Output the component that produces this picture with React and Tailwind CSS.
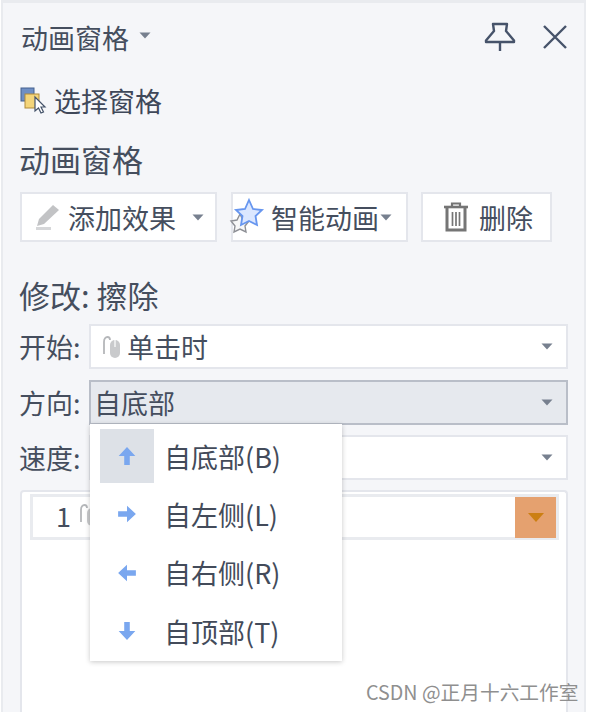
const font = { fontFamily: '"Noto Sans CJK SC", "Liberation Sans", sans-serif' };

function Caret({ className = "" }) {
  return (
    <svg width="12" height="7" viewBox="0 0 12 7" className={className}>
      <path d="M0.5 0.5H11.5L6 6.5Z" fill="#77808f" />
    </svg>
  );
}

function Mouse() {
  return (
    <svg width="20" height="24" viewBox="0 0 20 24" fill="none">
      <path d="M2 19V7c0-3 1.5-5 3.5-5S8 3 8 5" stroke="#b5b7ba" strokeWidth="1.8" />
      <rect x="8" y="5" width="10" height="18" rx="5" fill="#c9cacc" />
      <path d="M13 5v7" stroke="#fff" strokeWidth="1.2" />
    </svg>
  );
}

function Arrow({ rot }) {
  const r = { up: 0, right: 90, left: 270, down: 180 }[rot];
  return (
    <svg width="20" height="20" viewBox="0 0 18 18" style={{ transform: `rotate(${r}deg)` }}>
      <path d="M9 1L16.5 9H11.5V17H6.5V9H1.5Z" fill="#7aa7ef" />
    </svg>
  );
}

function Sel({ label, active, children }) {
  return (
    <div className="flex items-center h-[45px]">
      <span className="w-[69px] -ml-[1px] mr-[1px] text-[27px] leading-none whitespace-nowrap">{label}</span>
      <div
        className={`flex-1 h-full flex items-center border-2 pr-[13px] ${
          active ? "bg-[#e6e9ee] border-[#b9bec8]" : "bg-white border-[#e4e6ec]"
        }`}
      >
        <div className="flex-1 flex items-center min-w-0">{children}</div>
        <Caret />
      </div>
    </div>
  );
}

function MenuItem({ dir, text, active }) {
  return (
    <div className="flex items-center h-[58.3px] pl-[10px]">
      <div className={`w-[54px] h-[54px] flex items-center justify-center ${active ? "bg-[#dde1e7]" : ""}`}>
        <Arrow rot={dir} />
      </div>
      <span className="ml-[10px] text-[27px] leading-none text-[#434b5a] whitespace-nowrap">{text}</span>
    </div>
  );
}

export default function App() {
  return (
    <div className="relative w-[592px] h-[712px] overflow-hidden bg-white text-[#454e5e]" style={font}>
      <div className="ml-[1px] w-[585px] h-[712px] bg-[#f5f6f9] border-t-[3px] border-l-[2px] border-r-[2px] border-[#e9ebef] pl-[17px] pr-[16px] flex flex-col">
        <div className="flex items-center h-[68px] pt-[1px]">
          <span className="ml-[1px] text-[27px] leading-none">动画窗格</span>
          <Caret className="ml-[10px] mb-[4px]" />
          <div className="flex-1" />
          <svg width="32" height="32" viewBox="0 0 32 32" fill="none" stroke="#46536a" strokeWidth="2.4" className="mr-[27px] mb-[1px]">
            <path d="M9 3H23L22 10L30 19.5V21H2V19.5L10 10Z" strokeLinejoin="round" />
            <path d="M16 21V30" />
          </svg>
          <svg width="24" height="24" viewBox="0 0 24 24" fill="none" stroke="#46536a" strokeWidth="2.4" className="mr-[1px] mb-[1px]">
            <path d="M1 1L23 23M23 1L1 23" />
          </svg>
        </div>

        <div className="flex items-center h-[58px]">
          <svg width="27" height="27" viewBox="0 0 27 27" className="shrink-0 mr-[7px]">
            <rect x="1" y="1" width="13" height="13" fill="#6f8fc4" stroke="#45608f" />
            <rect x="5" y="7" width="14" height="14" fill="#f4d57a" stroke="#b08a3a" />
            <path d="M15 10V24L18.5 21L21 26L23.5 25L21 20H25Z" fill="#fff" stroke="#45536a" strokeWidth="1.2" />
          </svg>
          <span className="text-[27px] leading-none text-[#3f4859]">选择窗格</span>
        </div>

        <div className="h-[27px] mt-[16px] -ml-[1px] flex items-center text-[31px] leading-none">动画窗格</div>

        <div className="flex mt-[20px] h-[50px]">
          <div className="w-[197px] border-2 border-[#e4e6ec] bg-white flex items-center pl-[13px]">
            <svg width="25" height="26" viewBox="0 0 25 26" className="shrink-0">
              <path d="M18 1L24 6L9 20L2 22L4 15Z" fill="#c2c3c5" />
              <path d="M1 24.5H16" stroke="#d6d7d9" strokeWidth="3" />
            </svg>
            <span className="ml-[8px] text-[27px] leading-none whitespace-nowrap">添加效果</span>
            <Caret className="ml-[16px]" />
          </div>
          <div className="relative w-[177px] ml-[14px] border-2 border-[#e4e6ec] bg-white flex items-center pl-[38px]">
            <svg width="40" height="38" viewBox="0 0 40 38" className="absolute left-[-4px] top-[5px] overflow-visible">
              <path d="M11 15L14 21L20 22L16 27L17 33L11 30L5 33L6 27L2 22L8 21Z" fill="#f7f7f7" stroke="#8e9096" strokeWidth="1.4" />
              <path d="M20 1L24 10L33 11L26.5 17L28 26L20 22L12 26L13.5 17L7 11L16 10Z" fill="#dbe7ff" stroke="#6796ef" strokeWidth="1.8" />
            </svg>
            <span className="text-[27px] leading-none whitespace-nowrap">智能动画</span>
            <Caret className="ml-[1px]" />
          </div>
          <div className="w-[131px] ml-[13px] border-2 border-[#e4e6ec] bg-white flex items-center pl-[20px]">
            <svg width="26" height="30" viewBox="0 0 26 30" fill="none" stroke="#757575" className="shrink-0">
              <path d="M1 5H25" strokeWidth="2.6" />
              <path d="M9 4V1.5H17V4" strokeWidth="2.2" />
              <path d="M4 6V28H22V6" strokeWidth="3" />
              <path d="M9.5 10V24M13 10V24M16.5 10V24" strokeWidth="1.7" />
            </svg>
            <span className="ml-[10px] text-[27px] leading-none whitespace-nowrap">删除</span>
          </div>
        </div>

        <div className="mt-[34px] mb-[2px] h-[36px] -ml-[1px] flex items-center text-[31px] leading-none whitespace-nowrap">修改: 擦除</div>

        <div className="mt-[10px] flex flex-col gap-[10.5px]">
          <Sel label="开始:">
            <span className="ml-[11px]"><Mouse /></span>
            <span className="ml-[5px] text-[27px] leading-none whitespace-nowrap">单击时</span>
          </Sel>
          <Sel label="方向:" active>
            <span className="ml-[3px] text-[27px] leading-none whitespace-nowrap">自底部</span>
          </Sel>
          <Sel label="速度:" />
        </div>

        <div className="flex-1 mt-[10px] bg-white border-2 border-b-0 border-[#e4e6ec] rounded-t-[4px] pt-[2px] pl-[8px] pr-[7px]">
          <div className="h-[46px] border-[3px] border-[#e9ebef] flex items-center">
            <span className="ml-[23px] mb-[4px] text-[27px] leading-none">1</span>
            <span className="ml-[8px] mb-[4px]"><Mouse /></span>
            <div className="flex-1" />
            <div className="w-[41px] h-[41px] bg-[#e5a16f] flex items-center justify-center">
              <svg width="16" height="9" viewBox="0 0 16 9"><path d="M0 0H16L8 9Z" fill="#cc7f12" /></svg>
            </div>
          </div>
        </div>
      </div>

      <div className="absolute left-[90px] top-[424px] w-[252px] h-[237px] bg-white shadow-[0_1px_5px_rgba(0,0,0,0.22)] pt-[3px]">
        <MenuItem dir="up" text="自底部(B)" active />
        <MenuItem dir="right" text="自左侧(L)" />
        <MenuItem dir="left" text="自右侧(R)" />
        <MenuItem dir="down" text="自顶部(T)" />
      </div>

      <div className="absolute left-[366px] top-[680px] text-[19.7px] leading-[24px] text-[#8f8f8f] whitespace-nowrap">CSDN @正月十六工作室</div>
    </div>
  );
}
